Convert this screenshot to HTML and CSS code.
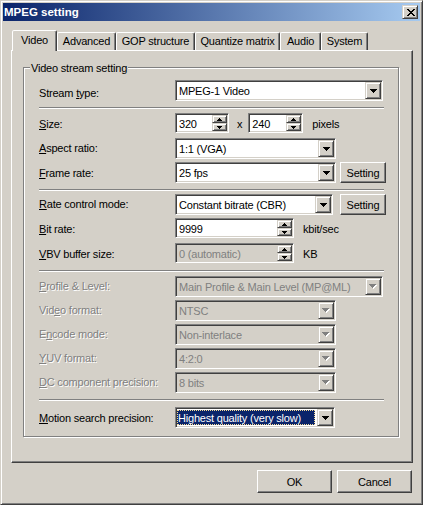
FILE: index.html
```html
<!DOCTYPE html>
<html>
<head>
<meta charset="utf-8">
<title>MPEG setting</title>
<link rel="stylesheet" href="styles.css">
</head>
<body>
<div class="window">
  <div class="titlebar">
    <span class="title">MPEG setting</span>
    <span class="close"><svg width="8" height="7" viewBox="0 0 8 7" shape-rendering="crispEdges"><path d="M0 0h2v1H0zM6 0h2v1H6zM1 1h2v1H1zM5 1h2v1H5zM2 2h4v1H2zM3 3h2v1H3zM2 4h4v1H2zM1 5h2v1H1zM5 5h2v1H5zM0 6h2v1H0zM6 6h2v1H6z" fill="#000"/></svg></span>
  </div>
  <div class="client">
    <div class="tabs">
      <div class="tab sel t-video">Video</div>
      <div class="tab t-adv">Advanced</div>
      <div class="tab t-gop">GOP structure</div>
      <div class="tab t-quant">Quantize matrix</div>
      <div class="tab t-audio">Audio</div>
      <div class="tab t-sys">System</div>
    </div>
    <div class="panel">
      <div class="group">
        <span class="group-title">Video stream setting</span>

        <div class="row">
          <span class="lbl lo3">Stream <u>t</u>ype:</span>
          <div class="combo w208"><span class="ctext">MPEG-1 Video</span><span class="cbtn"><svg width="7" height="4" viewBox="0 0 7 4" shape-rendering="crispEdges"><path d="M0 0h7v1H0zM1 1h5v1H1zM2 2h3v1H2zM3 3h1v1H3z" fill="#000"/></svg></span></div>
        </div>
        <div class="sep m6"></div>

        <div class="row m4">
          <span class="lbl lo2"><u>S</u>ize:</span>
          <div class="spin w54"><span class="ctext">320</span><span class="sbtns"><span class="sb"><svg width="5" height="3" viewBox="0 0 5 3" shape-rendering="crispEdges"><path d="M2 0h1v1H2zM1 1h3v1H1zM0 2h5v1H0z" fill="#000"/></svg></span><span class="sb"><svg width="5" height="3" viewBox="0 0 5 3" shape-rendering="crispEdges"><path d="M0 0h5v1H0zM1 1h3v1H1zM2 2h1v1H2z" fill="#000"/></svg></span></span></div>
          <span class="unit ux">x</span>
          <div class="spin w55"><span class="ctext">240</span><span class="sbtns"><span class="sb"><svg width="5" height="3" viewBox="0 0 5 3" shape-rendering="crispEdges"><path d="M2 0h1v1H2zM1 1h3v1H1zM0 2h5v1H0z" fill="#000"/></svg></span><span class="sb"><svg width="5" height="3" viewBox="0 0 5 3" shape-rendering="crispEdges"><path d="M0 0h5v1H0zM1 1h3v1H1zM2 2h1v1H2z" fill="#000"/></svg></span></span></div>
          <span class="unit u9">pixels</span>
        </div>

        <div class="row m5">
          <span class="lbl"><u>A</u>spect ratio:</span>
          <div class="combo w161"><span class="ctext">1:1 (VGA)</span><span class="cbtn"><svg width="7" height="4" viewBox="0 0 7 4" shape-rendering="crispEdges"><path d="M0 0h7v1H0zM1 1h5v1H1zM2 2h3v1H2zM3 3h1v1H3z" fill="#000"/></svg></span></div>
        </div>

        <div class="row m3">
          <span class="lbl lo1"><u>F</u>rame rate:</span>
          <div class="combo w161"><span class="ctext">25 fps</span><span class="cbtn"><svg width="7" height="4" viewBox="0 0 7 4" shape-rendering="crispEdges"><path d="M0 0h7v1H0zM1 1h5v1H1zM2 2h3v1H2zM3 3h1v1H3z" fill="#000"/></svg></span></div>
          <button class="btn small b4">Setting</button>
        </div>
        <div class="sep m6"></div>

        <div class="row m3">
          <span class="lbl"><u>R</u>ate control mode:</span>
          <div class="combo w158"><span class="ctext">Constant bitrate (CBR)</span><span class="cbtn"><svg width="7" height="4" viewBox="0 0 7 4" shape-rendering="crispEdges"><path d="M0 0h7v1H0zM1 1h5v1H1zM2 2h3v1H2zM3 3h1v1H3z" fill="#000"/></svg></span></div>
          <button class="btn small b7">Setting</button>
        </div>

        <div class="row m3">
          <span class="lbl lo1"><u>B</u>it rate:</span>
          <div class="spin w119"><span class="ctext">9999</span><span class="sbtns"><span class="sb"><svg width="5" height="3" viewBox="0 0 5 3" shape-rendering="crispEdges"><path d="M2 0h1v1H2zM1 1h3v1H1zM0 2h5v1H0z" fill="#000"/></svg></span><span class="sb"><svg width="5" height="3" viewBox="0 0 5 3" shape-rendering="crispEdges"><path d="M0 0h5v1H0zM1 1h3v1H1zM2 2h1v1H2z" fill="#000"/></svg></span></span></div>
          <span class="unit u9">kbit/sec</span>
        </div>

        <div class="row m5">
          <span class="lbl lo1"><u>V</u>BV buffer size:</span>
          <div class="spin w119 dis"><span class="ctext">0 (automatic)</span><span class="sbtns"><span class="sb"><svg width="5" height="3" viewBox="0 0 5 3" shape-rendering="crispEdges"><path d="M2 0h1v1H2zM1 1h3v1H1zM0 2h5v1H0z" fill="#000"/></svg></span><span class="sb"><svg width="5" height="3" viewBox="0 0 5 3" shape-rendering="crispEdges"><path d="M0 0h5v1H0zM1 1h3v1H1zM2 2h1v1H2z" fill="#000"/></svg></span></span></div>
          <span class="unit u9">KB</span>
        </div>
        <div class="sep m7"></div>

        <div class="row m4">
          <span class="lbl gray"><u>P</u>rofile &amp; Level:</span>
          <div class="combo w208 dis"><span class="ctext">Main Profile &amp; Main Level (MP@ML)</span><span class="cbtn"><svg width="8" height="5" viewBox="0 0 8 5" shape-rendering="crispEdges"><path d="M1 1h7v1H1zM2 2h5v1H2zM3 3h3v1H3zM4 4h1v1H4z" fill="#fff"/><path d="M0 0h7v1H0zM1 1h5v1H1zM2 2h3v1H2zM3 3h1v1H3z" fill="#808080"/></svg></span></div>
        </div>

        <div class="row m3">
          <span class="lbl gray">Vid<u>e</u>o format:</span>
          <div class="combo w161 dis"><span class="ctext">NTSC</span><span class="cbtn"><svg width="8" height="5" viewBox="0 0 8 5" shape-rendering="crispEdges"><path d="M1 1h7v1H1zM2 2h5v1H2zM3 3h3v1H3zM4 4h1v1H4z" fill="#fff"/><path d="M0 0h7v1H0zM1 1h5v1H1zM2 2h3v1H2zM3 3h1v1H3z" fill="#808080"/></svg></span></div>
        </div>

        <div class="row m3">
          <span class="lbl gray">E<u>n</u>code mode:</span>
          <div class="combo w161 dis"><span class="ctext">Non-interlace</span><span class="cbtn"><svg width="8" height="5" viewBox="0 0 8 5" shape-rendering="crispEdges"><path d="M1 1h7v1H1zM2 2h5v1H2zM3 3h3v1H3zM4 4h1v1H4z" fill="#fff"/><path d="M0 0h7v1H0zM1 1h5v1H1zM2 2h3v1H2zM3 3h1v1H3z" fill="#808080"/></svg></span></div>
        </div>

        <div class="row m3">
          <span class="lbl gray"><u>Y</u>UV format:</span>
          <div class="combo w161 dis"><span class="ctext">4:2:0</span><span class="cbtn"><svg width="8" height="5" viewBox="0 0 8 5" shape-rendering="crispEdges"><path d="M1 1h7v1H1zM2 2h5v1H2zM3 3h3v1H3zM4 4h1v1H4z" fill="#fff"/><path d="M0 0h7v1H0zM1 1h5v1H1zM2 2h3v1H2zM3 3h1v1H3z" fill="#808080"/></svg></span></div>
        </div>

        <div class="row m3">
          <span class="lbl gray"><u>D</u>C component precision:</span>
          <div class="combo w161 dis"><span class="ctext">8 bits</span><span class="cbtn"><svg width="8" height="5" viewBox="0 0 8 5" shape-rendering="crispEdges"><path d="M1 1h7v1H1zM2 2h5v1H2zM3 3h3v1H3zM4 4h1v1H4z" fill="#fff"/><path d="M0 0h7v1H0zM1 1h5v1H1zM2 2h3v1H2zM3 3h1v1H3z" fill="#808080"/></svg></span></div>
        </div>
        <div class="sep m6"></div>

        <div class="row m6">
          <span class="lbl lo1"><u>M</u>otion search precision:</span>
          <div class="combo w160"><span class="ctext selected">Highest quality (very slow)</span><span class="cbtn"><svg width="7" height="4" viewBox="0 0 7 4" shape-rendering="crispEdges"><path d="M0 0h7v1H0zM1 1h5v1H1zM2 2h3v1H2zM3 3h1v1H3z" fill="#000"/></svg></span></div>
        </div>
      </div>
    </div>
    <div class="actions">
      <button class="btn big">OK</button>
      <button class="btn big">Cancel</button>
    </div>
  </div>
</div>
</body>
</html>
```

FILE: styles.css
```css
html, body {
  margin: 0;
  padding: 0;
  background: #D4D0C8;
}

body {
  font-family: "Liberation Sans", Arial, sans-serif;
  font-size: 11px;
  letter-spacing: -0.2px;
  color: #000;
}

.window {
  width: 423px;
  height: 505px;
  box-sizing: border-box;
  border: 1px solid;
  border-color: #D4D0C8 #404040 #404040 #D4D0C8;
  box-shadow: inset 1px 1px 0 #fff, inset -1px -1px 0 #808080;
  padding: 2px;
  background: #D4D0C8;
  display: flex;
  flex-direction: column;
}

.titlebar {
  height: 18px;
  flex: none;
  background: linear-gradient(to right, #0A246A, #A6CAF0);
  display: flex;
  align-items: center;
  justify-content: space-between;
  padding: 0 2px 0 1px;
}

.title {
  color: #fff;
  font-weight: bold;
  font-size: 11.5px;
  letter-spacing: 0;
}

.close {
  width: 16px;
  height: 14px;
  box-sizing: border-box;
  background: #D4D0C8;
  border: 1px solid;
  border-color: #D4D0C8 #404040 #404040 #D4D0C8;
  box-shadow: inset 1px 1px 0 #fff, inset -1px -1px 0 #808080;
  display: flex;
  align-items: center;
  justify-content: center;
  padding-left: 1px;
}

.close svg { display: block; }

.client {
  padding: 9px 7px 0 8px;
  display: flex;
  flex-direction: column;
}

.tabs {
  display: flex;
  align-items: flex-end;
  height: 20px;
  padding-left: 1px;
}

.tab {
  height: 18px;
  box-sizing: border-box;
  border: 1px solid;
  border-bottom: none;
  border-color: #fff #404040 transparent #fff;
  box-shadow: inset -1px 0 0 #808080;
  border-radius: 2px 2px 0 0;
  text-align: center;
  padding-top: 2px;
  line-height: 13px;
  white-space: nowrap;
}

.tab.sel {
  height: 21px;
  margin-bottom: -1px;
  position: relative;
  z-index: 1;
  background: #D4D0C8;
  padding-top: 3px;
}

.t-video { width: 45px; }
.t-adv { width: 59px; }
.t-gop { width: 79px; }
.t-quant { width: 85px; }
.t-audio { width: 41px; }
.t-sys { width: 47px; }

.panel {
  border: 1px solid;
  border-color: #fff #404040 #404040 #fff;
  box-shadow: inset -1px -1px 0 #808080;
  padding: 16px 13px 25px 11px;
}

.group {
  position: relative;
  border: 1px solid #808080;
  box-shadow: 1px 1px 0 #fff, inset 1px 1px 0 #fff;
  padding: 12px 10px 8px 15px;
}

.group-title {
  position: absolute;
  top: -6px;
  left: 6px;
  padding: 0 1px;
  background: #D4D0C8;
  line-height: 13px;
}

.row {
  display: flex;
  align-items: center;
}

.m3 { margin-top: 3px; }
.m4 { margin-top: 4px; }
.m5 { margin-top: 5px; }
.m6 { margin-top: 6px; }
.m7 { margin-top: 7px; }

.lbl {
  width: 136px;
  flex: none;
  white-space: nowrap;
  line-height: 13px;
}

.lo1 { padding-top: 2px; }
.lo2 { padding-top: 3px; }
.lo3 { padding-top: 5px; }

.lbl u {
  text-decoration: underline;
  text-underline-offset: 1px;
}

.gray {
  color: #808080;
  text-shadow: 1px 1px 0 #fff;
}

.sep {
  height: 0;
  border-top: 1px solid #808080;
  border-bottom: 1px solid #fff;
  margin-right: 4px;
}

.combo, .spin {
  display: flex;
  box-sizing: border-box;
  border: 1px solid;
  border-color: #808080 #fff #fff #808080;
  box-shadow: inset 1px 1px 0 #404040, inset -1px -1px 0 #D4D0C8;
  background: #fff;
  padding: 1px;
  flex: none;
}

.combo { height: 21px; }
.spin { height: 20px; }

.w54 { width: 54px; }
.w55 { width: 55px; }
.w119 { width: 119px; }
.w158 { width: 158px; }
.w160 { width: 160px; }
.w161 { width: 161px; }
.w208 { width: 208px; }

.ctext {
  flex: 1;
  min-width: 0;
  display: flex;
  align-items: center;
  padding-left: 2px;
  padding-top: 1px;
  white-space: nowrap;
  overflow: hidden;
}

.ctext.selected {
  background: #0A246A;
  color: #fff;
  margin: 1px 2px 1px 0;
  padding-left: 1px;
  outline: 1px dotted #F5DB95;
  outline-offset: -1px;
}

.dis {
  background: #D4D0C8;
  color: #808080;
}

.cbtn {
  width: 16px;
  flex: none;
  box-sizing: border-box;
  background: #D4D0C8;
  border: 1px solid;
  border-color: #D4D0C8 #404040 #404040 #D4D0C8;
  box-shadow: inset 1px 1px 0 #fff, inset -1px -1px 0 #808080;
  display: flex;
  align-items: center;
  justify-content: center;
}

.cbtn svg, .sb svg { display: block; }

.sbtns {
  width: 15px;
  flex: none;
  display: flex;
  flex-direction: column;
}

.sb {
  flex: 1;
  box-sizing: border-box;
  background: #D4D0C8;
  border: 1px solid;
  border-color: #D4D0C8 #404040 #404040 #D4D0C8;
  box-shadow: inset 1px 1px 0 #fff, inset -1px -1px 0 #808080;
  display: flex;
  align-items: center;
  justify-content: center;
}

.unit {
  white-space: nowrap;
  padding-top: 1px;
}

.ux { margin: 0 6px 0 8px; }
.u9 { margin-left: 9px; }

.btn {
  appearance: none;
  -webkit-appearance: none;
  font: inherit;
  letter-spacing: inherit;
  color: #000;
  background: #D4D0C8;
  box-sizing: border-box;
  border: 1px solid;
  border-color: #fff #404040 #404040 #fff;
  box-shadow: inset -1px -1px 0 #808080;
  padding: 0;
  margin: 0;
  display: flex;
  align-items: center;
  justify-content: center;
  flex: none;
}

.btn.small {
  width: 46px;
  height: 21px;
}

.b4 { margin-left: 4px; }
.b7 { margin-left: 7px; }

.btn.big {
  width: 75px;
  height: 23px;
}

.actions {
  display: flex;
  justify-content: flex-end;
  gap: 5px;
  margin-top: 7px;
  padding-right: 1px;
}
```
